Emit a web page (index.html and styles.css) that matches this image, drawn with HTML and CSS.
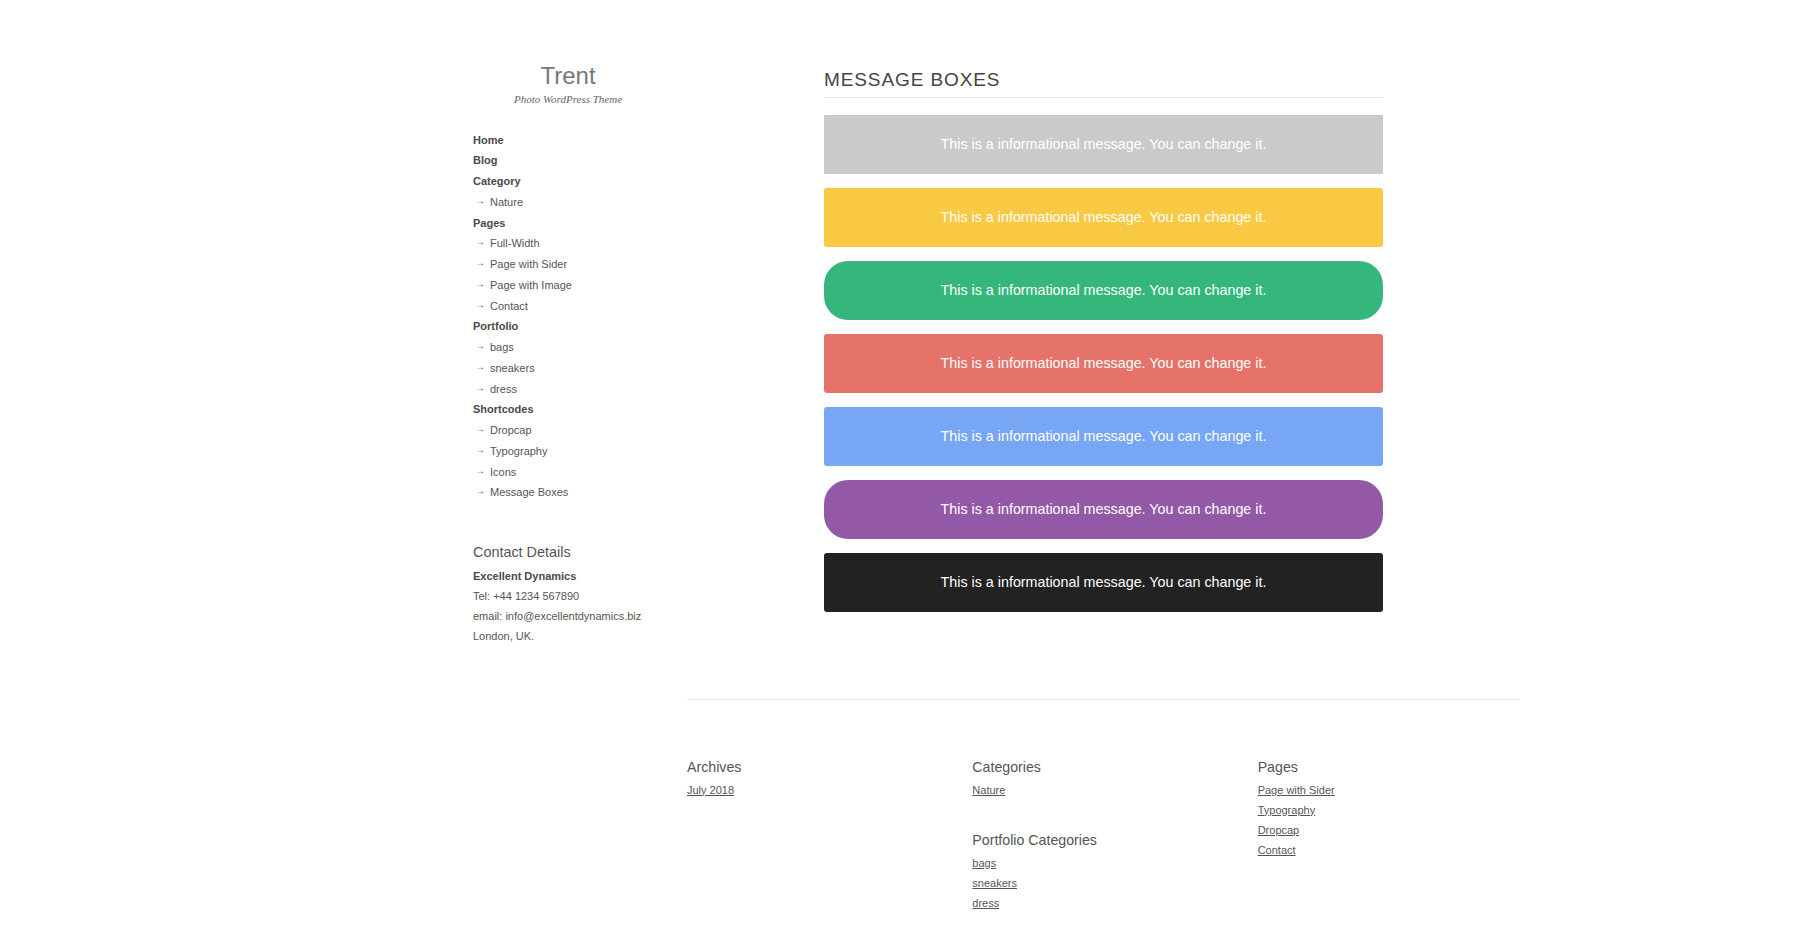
FILE: index.html
```html
<!DOCTYPE html>
<html lang="en">
<head>
    <meta charset="UTF-8">
    <meta name="viewport" content="width=device-width, initial-scale=1.0">
    <title>Message Boxes &ndash; Trent</title>
    <link rel="stylesheet" href="styles.css">
</head>
<body>
    <div class="layout">
        <!-- Sidebar -->
        <aside class="sidebar">
            <h1 class="site-title">Trent</h1>
            <p class="tagline">Photo WordPress Theme</p>

            <ul class="menu">
                <li><a href="#">Home</a></li>
                <li><a href="#">Blog</a></li>
                <li><a href="#">Category</a>
                    <ul class="sub-menu">
                        <li><a href="#">Nature</a></li>
                    </ul>
                </li>
                <li><a href="#">Pages</a>
                    <ul class="sub-menu">
                        <li><a href="#">Full-Width</a></li>
                        <li><a href="#">Page with Sider</a></li>
                        <li><a href="#">Page with Image</a></li>
                        <li><a href="#">Contact</a></li>
                    </ul>
                </li>
                <li><a href="#">Portfolio</a>
                    <ul class="sub-menu">
                        <li><a href="#">bags</a></li>
                        <li><a href="#">sneakers</a></li>
                        <li><a href="#">dress</a></li>
                    </ul>
                </li>
                <li><a href="#">Shortcodes</a>
                    <ul class="sub-menu">
                        <li><a href="#">Dropcap</a></li>
                        <li><a href="#">Typography</a></li>
                        <li><a href="#">Icons</a></li>
                        <li><a href="#">Message Boxes</a></li>
                    </ul>
                </li>
            </ul>

            <div class="contact">
                <h3>Contact Details</h3>
                <p><strong>Excellent Dynamics</strong></p>
                <p>Tel: +44 1234 567890</p>
                <p>email: info@excellentdynamics.biz</p>
                <p>London, UK.</p>
            </div>
        </aside>

        <!-- Content -->
        <main class="content">
            <h2 class="page-title">MESSAGE BOXES</h2>
            <div class="msg msg-grey">This is a informational message. You can change it.</div>
            <div class="msg msg-yellow">This is a informational message. You can change it.</div>
            <div class="msg msg-green rounded">This is a informational message. You can change it.</div>
            <div class="msg msg-red">This is a informational message. You can change it.</div>
            <div class="msg msg-blue">This is a informational message. You can change it.</div>
            <div class="msg msg-purple rounded">This is a informational message. You can change it.</div>
            <div class="msg msg-black">This is a informational message. You can change it.</div>
        </main>
    </div>

    <footer class="site-footer">
        <div class="footer-col">
            <div class="widget">
                <h4 class="widget-title">Archives</h4>
                <ul>
                    <li><a href="#">July 2018</a></li>
                </ul>
            </div>
        </div>
        <div class="footer-col">
            <div class="widget">
                <h4 class="widget-title">Categories</h4>
                <ul>
                    <li><a href="#">Nature</a></li>
                </ul>
            </div>
            <div class="widget">
                <h4 class="widget-title">Portfolio Categories</h4>
                <ul>
                    <li><a href="#">bags</a></li>
                    <li><a href="#">sneakers</a></li>
                    <li><a href="#">dress</a></li>
                </ul>
            </div>
        </div>
        <div class="footer-col">
            <div class="widget">
                <h4 class="widget-title">Pages</h4>
                <ul>
                    <li><a href="#">Page with Sider</a></li>
                    <li><a href="#">Typography</a></li>
                    <li><a href="#">Dropcap</a></li>
                    <li><a href="#">Contact</a></li>
                </ul>
            </div>
        </div>
    </footer>
</body>
</html>
```

FILE: styles.css
```css
body {
    margin: 0;
    font-family: "Liberation Sans", Arial, sans-serif;
    color: #555;
    background: #fff;
}

a {
    color: inherit;
    text-decoration: none;
}

.layout {
    display: grid;
    grid-template-columns: 190px 559px;
    column-gap: 161px;
    align-items: start;
    padding: 62px 0 0 473px;
}

/* Sidebar */
.site-title {
    margin: 0;
    text-align: center;
    font-size: 24px;
    line-height: 28px;
    font-weight: normal;
    color: #777;
}

.tagline {
    margin: 1.5px 0 0;
    text-align: center;
    font-family: "Liberation Serif", "Times New Roman", serif;
    font-style: italic;
    font-size: 11px;
    line-height: 14px;
    color: #666;
}

.menu {
    list-style: none;
    margin: 24px 0 0;
    padding: 0;
    font-size: 11px;
    line-height: 20.75px;
}

.menu > li > a {
    font-weight: bold;
    color: #4a4a4a;
}

.sub-menu {
    list-style: none;
    margin: 0;
    padding: 0;
}

.sub-menu li::before {
    content: "\2192";
    display: inline-block;
    width: 15px;
    margin-left: 2px;
    font-size: 10px;
    line-height: 1;
    vertical-align: 2px;
    color: #555;
}

.sub-menu a {
    color: #555;
}

.contact {
    margin-top: 39px;
    font-size: 11px;
    line-height: 20px;
}

.contact h3 {
    margin: 0 0 3.5px;
    font-size: 14.4px;
    line-height: 20px;
    font-weight: normal;
    color: #555;
}

.contact p {
    margin: 0;
}

.contact strong {
    color: #4a4a4a;
}

/* Content */
.page-title {
    margin: 6px 0 17px;
    padding-bottom: 5px;
    border-bottom: 1px solid #e5e5e5;
    font-size: 19px;
    line-height: 24px;
    letter-spacing: 0.9px;
    font-weight: normal;
    color: #444;
}

.msg {
    padding: 20px;
    margin-bottom: 14px;
    border-radius: 3px;
    font-size: 14.3px;
    line-height: 19px;
    text-align: center;
    color: #fff;
}

.msg.rounded {
    border-radius: 24px;
}

.msg-grey { background: #cacaca; border-radius: 1px; }
.msg-yellow { background: #f9c944; }
.msg-green { background: #35b77b; }
.msg-red { background: #e5736a; }
.msg-blue { background: #76a6f4; }
.msg-purple { background: #9459a6; }
.msg-black { background: #222; }

/* Footer */
.site-footer {
    display: grid;
    grid-template-columns: repeat(3, 1fr);
    column-gap: 24px;
    width: 832px;
    margin: 53px 0 0 687px;
    padding: 57px 0 30px;
    border-top: 1px solid #e8e8e8;
}

.widget + .widget {
    margin-top: 30px;
}

.widget-title {
    margin: 0 0 3px;
    font-size: 14.2px;
    line-height: 20px;
    font-weight: normal;
    color: #555;
}

.widget ul {
    list-style: none;
    margin: 0;
    padding: 0;
    font-size: 11px;
    line-height: 20px;
}

.widget a {
    color: #555;
    text-decoration: underline;
}
```
